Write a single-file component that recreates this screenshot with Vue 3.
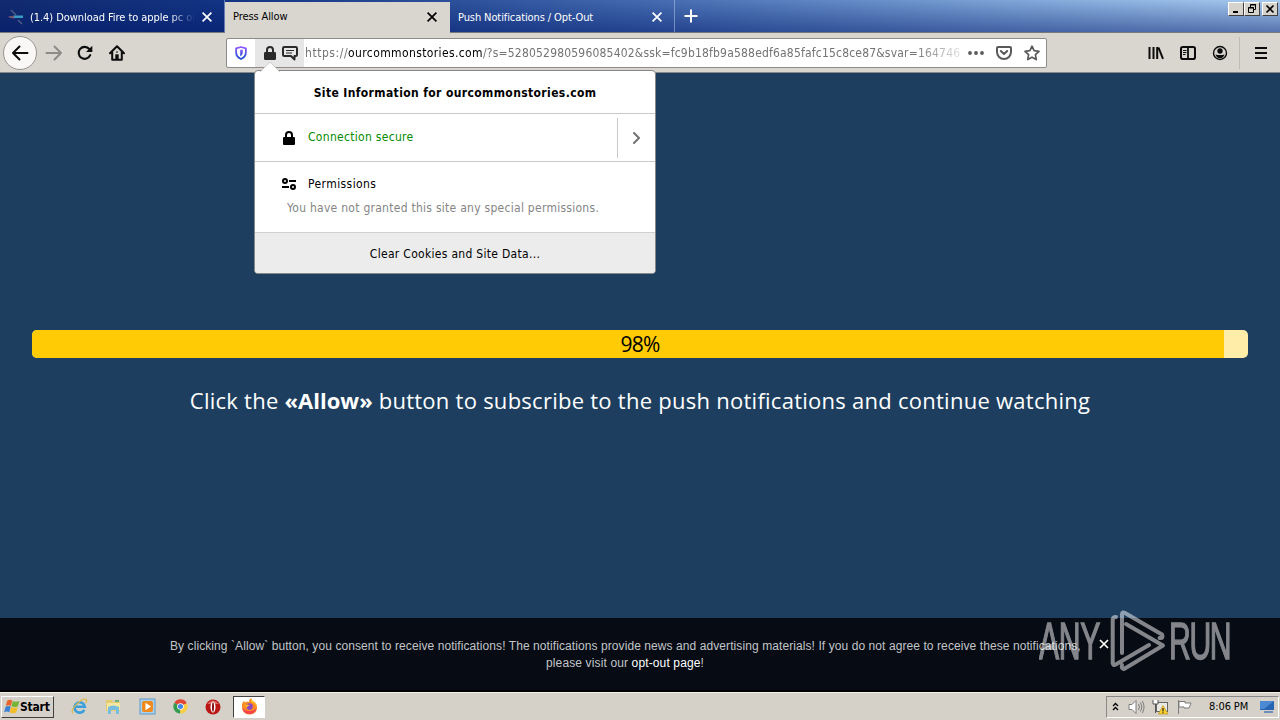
<script setup>
import { ref } from 'vue';

const percent = ref(98);
const tabs = ref([
    { id: 1, title: '(1.4) Download Fire to apple pc ol', icon: true, active: false },
    { id: 2, title: 'Press Allow', icon: false, active: true },
    { id: 3, title: 'Push Notifications / Opt-Out', icon: false, active: false },
]);
</script>
<template>
    <div class="screen">
        <!-- tabs -->
        <div class="tab_bar">
            <div v-for="tab in tabs" :key="tab.id" class="tab" :class="{ active: tab.active, first: tab.icon }">
                <svg v-if="tab.icon" class="favicon" width="16" height="16" viewBox="0 0 16 16">
                    <path d="M3 1l5 5M10 11l4 4" stroke="#4b5d85" stroke-width="1.5" />
                    <path d="M0 7.5l7-1v3L2 9z" fill="#75546e" />
                    <path d="M6 6.5l9 0v2.5H6z" fill="#3a9cc5" />
                </svg>
                <span class="tab_title">{{ tab.title }}</span>
                <svg class="tab_close" width="10" height="10" viewBox="0 0 10 10">
                    <path d="M.6 .6l8.8 8.8M9.4 .6L.6 9.4" stroke="currentColor" stroke-width="1.7" />
                </svg>
            </div>
            <div class="new_tab">
                <svg width="14" height="14" viewBox="0 0 14 14"><path d="M7 .5v13M.5 7h13" stroke="#fff" stroke-width="2" /></svg>
            </div>
            <div class="win_btns">
                <div class="win_btn"><svg width="12" height="10" viewBox="0 0 12 10"><path d="M3 8h5" stroke="#000" stroke-width="2" /></svg></div>
                <div class="win_btn">
                    <svg width="12" height="10" viewBox="0 0 12 10" fill="none" stroke="#000">
                        <path d="M4.5 3V.5h5v5H7.5M4 1h6M2.5 3.5h5v5h-5zM2 4h6" />
                    </svg>
                </div>
                <div class="win_btn last"><svg width="12" height="10" viewBox="0 0 12 10"><path d="M2.500 1.500l7 7M9.500 1.500l-7 7" stroke="#000" stroke-width="1.700" /></svg></div>
            </div>
        </div>

        <!-- toolbar -->
        <div class="toolbar">
            <div class="nav_btns">
                <div class="back">
                    <svg width="18" height="16" viewBox="0 0 18 16" fill="none" stroke="#0c0c0d" stroke-width="2"><path d="M16.5 8H2M8.5 1.5L2 8l6.5 6.5" stroke-linecap="round" stroke-linejoin="round" /></svg>
                </div>
                <svg class="forward" width="18" height="16" viewBox="0 0 18 16" fill="none" stroke="#8d8b86" stroke-width="2"><path d="M1.5 8H16M9.5 1.5L16 8l-6.5 6.5" stroke-linecap="round" stroke-linejoin="round" /></svg>
                <svg class="reload" width="16" height="16" viewBox="0 0 16 16"><path d="M13.2 10.2A6 6 0 1 1 12.3 4" fill="none" stroke="#0c0c0d" stroke-width="2.1" stroke-linecap="round" /><path d="M15.3 .8v6.3H9z" fill="#0c0c0d" /></svg>
                <svg class="home" width="16" height="16" viewBox="0 0 16 16">
                    <path d="M1 8.2L8 1.2l7 7M3.2 7v7.8h9.6V7" fill="none" stroke="#0c0c0d" stroke-width="2" stroke-linecap="round" stroke-linejoin="round" />
                    <path d="M6.3 14V9.3h3.4V14z" fill="#0c0c0d" /><path d="M7 7h2" stroke="#0c0c0d" />
                </svg>
            </div>
            <div class="url_bar">
                <div class="shield">
                    <svg width="12" height="14" viewBox="0 0 12 14">
                        <defs><linearGradient id="sh" x1="0" y1="0" x2="0" y2="1"><stop offset="0" stop-color="#9059ff" /><stop offset="1" stop-color="#1c50cf" /></linearGradient></defs>
                        <path d="M6 1l4.9 1.4v3.7C10.9 9.5 8.5 12 6 13 3.5 12 1.1 9.5 1.1 6.1V2.4z" fill="none" stroke="url(#sh)" stroke-width="1.8" stroke-linejoin="round" />
                        <path d="M5.200 3.800h2.600v3q0 2-2.600 3.700z" fill="url(#sh)" />
                    </svg>
                </div>
                <div class="identity">
                    <svg width="12" height="14" viewBox="0 0 12 14"><path d="M3 7V4a3 3 0 0 1 6 0v3" fill="none" stroke="#2b2a2b" stroke-width="2" /><rect y="6" width="12" height="8" rx="1.2" fill="#2b2a2b" /></svg>
                    <svg class="chat" width="16" height="15" viewBox="0 0 16 15" fill="none" stroke="#2b2a2b"><path d="M2.2 1h11.6q1.2 0 1.2 1.2v6.6q0 1.200-1.2 1.2H12.5v3.500L9 10H2.200Q1 10 1 8.800V2.200Q1 1 2.200 1z" stroke-width="2" stroke-linejoin="round" /><path d="M4 4.500h8M4 7h6" stroke-width="1.200" /></svg>
                </div>
                <div class="url"><i>https://</i><b>ourcommonstories.com</b>/?s=528052980596085402&amp;ssk=fc9b18fb9a588edf6a85fafc15c8ce87&amp;svar=164746</div>
                <div class="url_actions">
                    <svg width="16" height="4" viewBox="0 0 16 4" fill="#5a5a5c"><circle cx="2" cy="2" r="1.900" /><circle cx="8" cy="2" r="1.900" /><circle cx="14" cy="2" r="1.900" /></svg>
                    <svg width="16" height="14" viewBox="0 0 16 14" fill="none" stroke="#5a5a5c" stroke-width="2" stroke-linecap="round" stroke-linejoin="round"><path d="M2 1h12q1 0 1 1v4a7 7 0 0 1-14 0V2q0-1 1-1z" /><path d="M4.800 5L8 8l3.200-3" /></svg>
                    <svg width="16" height="16" viewBox="0 0 16 16" fill="none" stroke="#5a5a5c" stroke-width="1.700" stroke-linejoin="round"><path d="M8 1.200l2.100 4.500 4.900.6-3.600 3.400.9 4.900L8 12.200l-4.300 2.400.9-4.900L1 6.300l4.900-.6z" /></svg>
                </div>
            </div>
            <div class="tools">
                <svg width="16" height="16" viewBox="0 0 16 16" stroke="#0c0c0d" stroke-width="2"><path d="M1.500 2v12M5.500 2v12M9.200 2v12M10.500 2.500L15 13.800" /></svg>
                <svg width="16" height="14" viewBox="0 0 16 14" fill="none" stroke="#0c0c0d"><rect x="1" y="1" width="14" height="12" rx="1.800" stroke-width="2" /><path d="M8 1v12" stroke-width="1.800" /><path d="M3 4.500h3.500M3 6.500h3.500M3 8.500h2.500" /></svg>
                <svg width="16" height="16" viewBox="0 0 16 16"><circle cx="8" cy="8" r="6.500" fill="none" stroke="#0c0c0d" stroke-width="1.400" /><circle cx="8" cy="6" r="2.700" fill="#0c0c0d" /><path d="M3.500 9.500q4.500 1.200 9 0-1 3.700-4.500 3.700t-4.500-3.700z" fill="#0c0c0d" /></svg>
                <div class="tool_line"></div>
                <svg width="12" height="12" viewBox="0 0 12 12" stroke="#0c0c0d" stroke-width="2"><path d="M0 1h12M0 6h12M0 11h12" /></svg>
            </div>
        </div>

        <!-- page -->
        <div class="page">
            <div class="progress">
                <div class="progress_in" :style="{ width: percent + '%' }"></div>
                <span>{{ percent }}%</span>
            </div>
            <p class="tip">Click the <b>«Allow»</b> button to subscribe to the push notifications and continue watching</p>
            <div class="consent">
                <p class="line1">By clicking `Allow` button, you consent to receive notifications! The notifications provide news and advertising materials! If you do not agree to receive these notifications,</p>
                <p class="line2">please visit our <a>opt-out page</a>!</p>
                <svg class="consent_close" width="10" height="10" viewBox="0 0 10 10"><path d="M1 1l8 8M9 1L1 9" stroke="#fff" stroke-width="1.700" /></svg>
            </div>
        </div>

        <!-- taskbar -->
        <div class="taskbar">
            <div class="start">
                <svg width="16" height="15" viewBox="0 0 16 15">
                    <path d="M3.300 1.500q3-1.500 5 0L6.900 7q-2.500-1.500-5.100 0z" fill="#e8642c" />
                    <path d="M8.900 2q3 1.500 6.500 0L13.900 7.200q-3 1.500-6.500 0z" fill="#77b435" />
                    <path d="M1.600 7.800q2.500-1.500 5.100 0L5.300 13.300q-2.500-1.500-5.200 0z" fill="#3c82d4" />
                    <path d="M7.200 8.100q3 1.500 6.500 0L12.200 13.500q-3 1.500-6.400 0z" fill="#f2bd27" />
                </svg>
                <span>Start</span>
            </div>
            <div class="apps">
                <svg width="17" height="17" viewBox="0 0 17 17" fill="none">
                    <path d="M13.300 11.800A5.200 5.200 0 1 1 13.800 8.700H4.500" stroke="#3b9fdc" stroke-width="2.600" />
                    <path d="M1.800 15.300C-1 11.500 10.500-.8 15.300 1.500q1 1-.8 3.500" stroke="#dcb84c" stroke-width="1.300" />
                </svg>
                <svg width="17" height="17" viewBox="0 0 17 17">
                    <path d="M1 2h6l1 2h7v9H1z" fill="#e4cb72" /><path d="M2 5h13v7H2z" fill="#f5e6a2" />
                    <path d="M3 9q5-3 11 0v7h-3v-4H6v4H3z" fill="#78bce0" /><path d="M10 2h4v2h-4z" fill="#6bae78" />
                </svg>
                <svg width="17" height="17" viewBox="0 0 17 17">
                    <rect x="1" y="1" width="15" height="15" fill="#a9d0ee" stroke="#5e9cc8" /><rect x="3" y="3" width="11" height="11" rx="2" fill="#f08a1c" /><path d="M6.500 4.800v7.500l5.500-3.800z" fill="#fff" />
                </svg>
                <svg width="15" height="15" viewBox="0 0 16 16">
                    <path d="M8 8L1.500 4A7.500 7.500 0 0 1 14.700 4.500z" fill="#df4634" /><path d="M8 8L14.700 4.500A7.500 7.500 0 0 1 7.500 15.500z" fill="#f8ce43" />
                    <path d="M8 8l-.5 7.500A7.500 7.500 0 0 1 1.500 4z" fill="#369b50" /><circle cx="8" cy="8" r="3.500" fill="#fff" /><circle cx="8" cy="8" r="2.700" fill="#4584e8" />
                </svg>
                <svg width="16" height="16" viewBox="0 0 16 16"><circle cx="8" cy="8" r="7.500" fill="#ba1715" /><path d="M2 5q6-7 12 0" fill="#df6862" /><ellipse cx="8" cy="8" rx="2.500" ry="5.600" fill="#fff" /><ellipse cx="8" cy="8" rx="1" ry="4.800" fill="#860c10" /></svg>
                <div class="app_cur">
                    <svg width="17" height="17" viewBox="0 0 17 17"><path d="M2.500 3l2 1.500Q6 3 8 4q0-3 2-4 1 3 4 4 3 4 1.500 8a7.500 7.500 0 0 1-14-.5Q0 7 2.500 3z" fill="#ff8c20" /><path d="M1.200 9.500Q2 16 8.500 16q6 0 7.300-6-3 3-7 3-5 0-7.600-3.500z" fill="#f5444f" /><circle cx="8.500" cy="8.600" r="3.300" fill="#8a48c2" /><path d="M3.500 7q3.500-1 5.500 0-3 1-3 3-2-1-2.500-3z" fill="#ffad2e" /><path d="M10 .5q1 2.700 4 4 2 2 1.800 4Q14 4.500 10.500 4z" fill="#ffd53b" /></svg>
                </div>
            </div>
            <div class="tray">
                <svg width="7" height="9" viewBox="0 0 7 9" fill="none" stroke="#000" stroke-width="1.300"><path d="M1 4l2.500-2.500L6 4M1 8l2.500-2.500L6 8" /></svg>
                <svg class="sound" width="17" height="16" viewBox="0 0 17 16" stroke="#7e7e7e" fill="none"><path d="M1 5.500h3l4-4v13l-4-4H1z" fill="#fff" /><path d="M10.500 5q2 3 0 6M12.500 3.500q3 4.500 0 9M14.300 2q3.500 6 0 12" /></svg>
                <svg width="17" height="16" viewBox="0 0 17 16"><rect x="4.500" y="3.500" width="11" height="9" fill="#e8e8e4" stroke="#666" /><path d="M1 1v4h5V1M3.500 5v9" fill="#fff" stroke="#555" /><path d="M11 6.500l5 8.500H6.500z" fill="#ffd22e" stroke="#b38b11" stroke-width=".6" /><path d="M11 9v3.500M11 13.300v1" stroke="#222" stroke-width="1.200" /></svg>
                <svg width="17" height="16" viewBox="0 0 17 16" fill="#fff" stroke="#7c7c7c"><path d="M2.500 1v14M3 2.500h6v1.500h6l-2 5H8V8H3z" /></svg>
                <span>8:06 PM</span>
                <svg class="desk" width="16" height="14" viewBox="0 0 16 14"><path d="M1 1h14v9H1z" fill="#2864b4" /><path d="M1 1h14L5 9H1z" fill="#4b8ad2" /><path d="M5 12h9" stroke="#4a78b4" stroke-width="1.500" /></svg>
            </div>
        </div>

        <!-- site information -->
        <div class="popup">
            <svg class="arrow" width="22" height="11" viewBox="0 0 22 11"><path d="M1 11L11 1l10 10" fill="#fff" stroke="#bbb" stroke-width=".7" /></svg>
            <div class="popup_title"><span>Site Information for ourcommonstories.com</span></div>
            <div class="popup_conn">
                <svg width="12" height="14" viewBox="0 0 12 14"><path d="M3 7V4a3 3 0 0 1 6 0v3" fill="none" stroke="#000" stroke-width="2" /><rect y="6" width="12" height="8" rx="1" /></svg>
                <span>Connection secure</span>
                <div class="more"><svg width="8" height="12" viewBox="0 0 8 12" fill="none" stroke="#737373" stroke-width="2"><path d="M1 1l5 5-5 5" stroke-linecap="round" stroke-linejoin="round" /></svg></div>
            </div>
            <div class="popup_perm">
                <div class="perm_head">
                    <svg width="14" height="12" viewBox="0 0 14 12" fill="none" stroke="#000" stroke-width="2"><circle cx="3" cy="3" r="2" /><circle cx="11" cy="9" r="2" /><path d="M7 3h7M0 9h7" /></svg>
                    <span>Permissions</span>
                </div>
                <p>You have not granted this site any special permissions.</p>
            </div>
            <div class="popup_foot"><span>Clear Cookies and Site Data...</span></div>
        </div>

        <!-- watermark -->
        <svg class="watermark" width="194" height="64" viewBox="0 0 194 64">
            <g fill="none" stroke="#fff" stroke-width="4" stroke-linejoin="round" stroke-linecap="round">
                <path d="M77 8q-3.300 0-3.300 3v43q.3 3 3 1.500L110 36" />
                <path d="M83 44V5q.5-2.500 3-1l37 21.500q2 4-2.500 3.500M87 15l37 21.500-39 23.500q-3-.5-2-4" />
            </g>
            <g class="mark_text">
                <text transform="translate(0 50) scale(.58 1)" textLength="106">ANY</text>
                <text transform="translate(130 50) scale(.58 1)" textLength="108">RUN</text>
            </g>
        </svg>
    </div>
</template>
<style>
body {
    overflow: hidden;
}
</style>
<style scoped>
.screen {
    width: 1280px;
    height: 720px;
    position: relative;
    overflow: hidden;
    display: flex;
    flex-direction: column;
    font-family: "DejaVu Sans Condensed", "DejaVu Sans", sans-serif;
    font-stretch: condensed;
    font-size: 12px;
    color: #000;
}

p {
    margin: 0;
}

svg {
    flex: none;
    display: block;
}

/* 标签栏 */
.tab_bar {
    height: 33px;
    flex: none;
    display: flex;
    background: linear-gradient(rgba(255, 255, 255, .03), rgba(8, 30, 110, .5)), linear-gradient(90deg, #0a246a, #0b2e80 18%, #3d65ad 50%, #7da5d8 80%, #a6caf0);
    border-bottom: 1px solid #77787d;
    box-sizing: border-box;
}

.tab {
    width: 225px;
    height: 32px;
    display: flex;
    align-items: center;
    padding: 2px 12px 0 8px;
    box-sizing: border-box;
    border-right: 1px solid rgba(190, 205, 235, .5);
    color: #fff;
    font-size: 11px;
}

.tab.active {
    height: 31px;
    margin-top: 2px;
    padding: 0 13px 2px 8px;
    background: #d9d6cf;
    color: #000;
    border: 0;
}

.favicon {
    margin-right: 6px;
}

.tab_title {
    flex: 1;
    overflow: hidden;
    white-space: nowrap;
    letter-spacing: -.1px;
}

.first .tab_title {
    margin-right: 7px;
    letter-spacing: -.06px;
    mask-image: linear-gradient(90deg, #000 84%, transparent);
}

.new_tab {
    padding: 9px;
}

.win_btns {
    display: flex;
    margin-left: auto;
    padding: 2px 2px 0 0;
}

.win_btn {
    width: 16px;
    height: 14px;
    box-sizing: border-box;
    background: #d6d3cc;
    border: 1px solid;
    border-color: #fff #404040 #404040 #fff;
    padding: 1px;
}

.win_btn.last {
    margin-left: 2px;
}

/* 工具栏 */
.toolbar {
    height: 40px;
    flex: none;
    display: flex;
    align-items: center;
    background: #d9d6cf;
    border-bottom: 1px solid #84898c;
    box-sizing: border-box;
}

.nav_btns {
    width: 226px;
    display: flex;
    align-items: center;
    padding-left: 3px;
    box-sizing: border-box;
}

.back {
    width: 34px;
    height: 34px;
    display: flex;
    align-items: center;
    justify-content: center;
    border: 1px solid #969590;
    border-radius: 50%;
    background: #f9f8f6;
    box-sizing: border-box;
}

.forward {
    margin-left: 8px;
}

.reload {
    margin-left: 14px;
}

.home {
    margin-left: 16px;
}

.url_bar {
    width: 821px;
    height: 30px;
    display: flex;
    align-items: center;
    box-sizing: border-box;
    border: 1px solid #8e8c88;
    border-radius: 2px;
    background: #fff;
}

.shield {
    width: 28px;
    display: flex;
    justify-content: center;
}

.identity {
    width: 49px;
    height: 28px;
    display: flex;
    align-items: center;
    gap: 6px;
    padding-left: 9px;
    box-sizing: border-box;
    background: #e7e6e6;
}

.chat {
    margin-top: 2px;
}

.url {
    width: 655px;
    margin-left: 1px;
    padding-top: 1px;
    overflow: hidden;
    white-space: nowrap;
    font-size: 12px;
    color: #737373;
    letter-spacing: .19px;
    mask-image: linear-gradient(90deg, #000 93%, rgba(0, 0, 0, .2));
}

.url i {
    font-style: normal;
    letter-spacing: .55px;
}

.url b {
    font-weight: normal;
    letter-spacing: .38px;
    color: #000;
}

.url_actions {
    display: flex;
    align-items: center;
    gap: 12px;
    margin-left: 8px;
}

.tools {
    display: flex;
    align-items: center;
    gap: 16px;
    margin-left: 101px;
}

.tool_line {
    width: 1px;
    height: 32px;
    margin-left: -5px;
    margin-right: -1px;
    background: #bfbcb6;
}

/* 页面 */
.page {
    height: 619px;
    flex: none;
    display: flex;
    flex-direction: column;
    background: #1d3e5e;
}

.progress {
    height: 28px;
    margin: 257px 32px 0;
    display: grid;
    border-radius: 5px;
    overflow: hidden;
    background: #ffeda8;
}

.progress_in {
    grid-area: 1 / 1;
    background: #ffcb05;
}

.progress span {
    grid-area: 1 / 1;
    z-index: 1;
    text-align: center;
    font: 21px/28px "Open Sans", sans-serif;
    letter-spacing: -.8px;
}

.tip {
    margin-top: 26px;
    text-align: center;
    white-space: nowrap;
    font: 22px/32px "Open Sans", sans-serif;
    letter-spacing: .26px;
    color: #fff;
}

.tip b {
    letter-spacing: 0;
}

.consent {
    height: 74px;
    margin-top: auto;
    padding-top: 20px;
    box-sizing: border-box;
    border-bottom: 2px solid #000;
    position: relative;
    background: #060b14;
    color: #c3c5c8;
    font: 12px/17px "Liberation Sans", sans-serif;
    white-space: nowrap;
}

.line1 {
    padding-left: 170px;
    letter-spacing: .083px;
}

.line2 {
    padding-left: 546px;
    letter-spacing: .13px;
}

.consent a {
    color: #fff;
}

.consent_close {
    position: absolute;
    left: 1099px;
    top: 21px;
}

/* 任务栏 */
.taskbar {
    height: 28px;
    flex: none;
    display: flex;
    align-items: center;
    padding: 0 1px;
    box-sizing: border-box;
    background: #d5d1c9;
    border-top: 1px solid #f4f2ee;
}

.start {
    width: 53px;
    height: 22px;
    display: flex;
    align-items: center;
    padding-left: 2px;
    box-sizing: border-box;
    border: 1px solid;
    border-color: #fff #404040 #404040 #fff;
    font-size: 12px;
    font-weight: bold;
    letter-spacing: -.2px;
}

.apps {
    display: flex;
    align-items: center;
    gap: 17px;
    margin-left: 17px;
}

.app_cur {
    width: 32px;
    height: 22px;
    margin-left: -5px;
    display: flex;
    align-items: center;
    justify-content: center;
    box-sizing: border-box;
    background: #fff;
    border: 1px solid;
    border-color: #404040 #fff #fff #404040;
}

.tray {
    width: 173px;
    height: 22px;
    display: flex;
    align-items: center;
    gap: 7px;
    margin-left: auto;
    padding-left: 5px;
    box-sizing: border-box;
    border: 1px solid;
    border-color: #888 #fff #fff #888;
    font-size: 11px;
    letter-spacing: -.1px;
    white-space: nowrap;
}

.sound {
    margin-left: 2px;
}

.tray span {
    margin-left: 9px;
}

.desk {
    margin-left: 4px;
}

/* 站点信息 */
.popup {
    width: 402px;
    height: 204px;
    position: absolute;
    left: 254px;
    top: 70px;
    box-sizing: border-box;
    border: 1px solid #85878a;
    border-radius: 4px;
    background: #fff;
    font-size: 12px;
    letter-spacing: .3px;
    white-space: nowrap;
}

.arrow {
    position: absolute;
    left: 4px;
    top: -10px;
}

.popup_title {
    height: 43px;
    line-height: 44px;
    box-sizing: border-box;
    text-align: center;
    font-weight: bold;
    letter-spacing: .38px;
    border-bottom: 1px solid #c9c9c9;
}

.popup_conn {
    height: 48px;
    display: flex;
    align-items: center;
    padding-left: 28px;
    box-sizing: border-box;
    border-bottom: 1px solid #c9c9c9;
    color: #058b00;
}

.popup_conn span {
    margin-left: 13px;
    padding-bottom: 2px;
}

.more {
    width: 38px;
    height: 40px;
    margin-left: auto;
    display: flex;
    align-items: center;
    justify-content: center;
    box-sizing: border-box;
    border-left: 1px solid #c9c9c9;
}

.popup_perm {
    height: 70px;
    padding: 13px 0 0 27px;
    box-sizing: border-box;
}

.perm_head {
    height: 17px;
    display: flex;
    align-items: center;
}

.perm_head span {
    margin-left: 12px;
    letter-spacing: .42px;
}

.popup_perm p {
    margin: 8px 0 0 5px;
    line-height: 17px;
    color: #858585;
    letter-spacing: .27px;
}

.popup_foot {
    height: 41px;
    line-height: 42px;
    box-sizing: border-box;
    text-align: center;
    border-top: 1px solid #d0d0d0;
    border-radius: 0 0 3px 3px;
    background: #ececec;
}

/* 水印 */
.watermark {
    position: absolute;
    left: 1039px;
    top: 609px;
    opacity: .5;
}

.mark_text {
    font: 52px "Liberation Sans", sans-serif;
    fill: #fff;
    stroke: #fff;
    stroke-width: 1.4px;
}
</style>
